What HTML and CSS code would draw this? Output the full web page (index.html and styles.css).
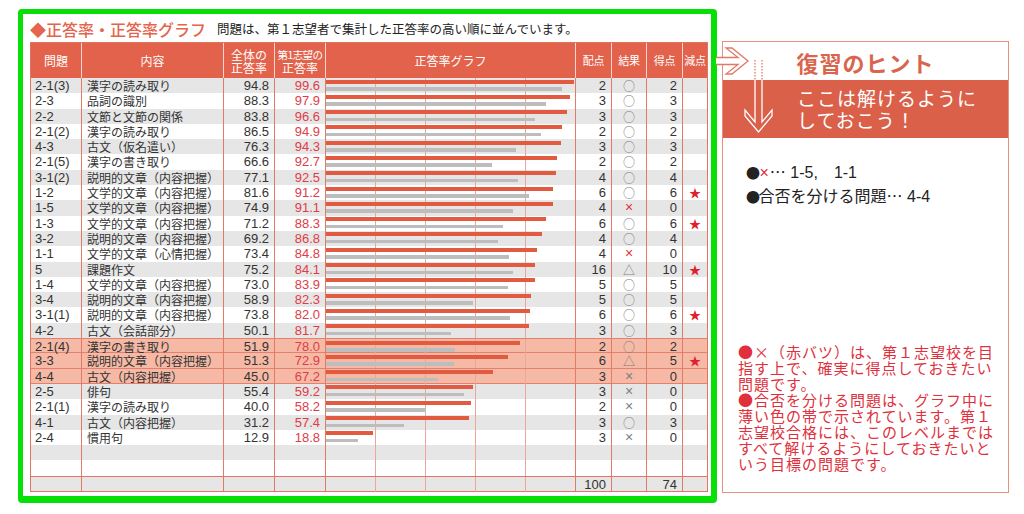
FILE: index.html
```html
<!DOCTYPE html>
<html lang="ja">
<head>
<meta charset="utf-8">
<title>正答率・正答率グラフ</title>
<link rel="stylesheet" href="styles.css">
</head>
<body>
<div class="page">
  <section class="frame">
    <div class="title">
      <span class="title-main">◆正答率・正答率グラフ</span>
      <span class="title-sub">問題は、第１志望者で集計した正答率の高い順に並んでいます。</span>
    </div>
    <div class="table">
      <div class="row head">
        <div class="c">問題</div>
        <div class="c">内容</div>
        <div class="c">全体の<br>正答率</div>
        <div class="c"><span class="h-small">第1志望の</span>正答率</div>
        <div class="c">正答率グラフ</div>
        <div class="c hn">配点</div>
        <div class="c hn">結果</div>
        <div class="c hn">得点</div>
        <div class="c hn">減点</div>
      </div>

      <div class="row odd"><div class="c no">2-1(3)</div><div class="c ct">漢字の読み取り</div><div class="c num">94.8</div><div class="c num red">99.6</div><div class="c graph"><div class="bar b1" style="width:99.6%"></div><div class="bar b2" style="width:94.8%"></div></div><div class="c num">2</div><div class="c res">○</div><div class="c num">2</div><div class="c star"></div></div>
      <div class="row"><div class="c no">2-3</div><div class="c ct">品詞の識別</div><div class="c num">88.3</div><div class="c num red">97.9</div><div class="c graph"><div class="bar b1" style="width:97.9%"></div><div class="bar b2" style="width:88.3%"></div></div><div class="c num">3</div><div class="c res">○</div><div class="c num">3</div><div class="c star"></div></div>
      <div class="row odd"><div class="c no">2-2</div><div class="c ct">文節と文節の関係</div><div class="c num">83.8</div><div class="c num red">96.6</div><div class="c graph"><div class="bar b1" style="width:96.6%"></div><div class="bar b2" style="width:83.8%"></div></div><div class="c num">3</div><div class="c res">○</div><div class="c num">3</div><div class="c star"></div></div>
      <div class="row"><div class="c no">2-1(2)</div><div class="c ct">漢字の読み取り</div><div class="c num">86.5</div><div class="c num red">94.9</div><div class="c graph"><div class="bar b1" style="width:94.9%"></div><div class="bar b2" style="width:86.5%"></div></div><div class="c num">2</div><div class="c res">○</div><div class="c num">2</div><div class="c star"></div></div>
      <div class="row odd"><div class="c no">4-3</div><div class="c ct">古文（仮名遣い）</div><div class="c num">76.3</div><div class="c num red">94.3</div><div class="c graph"><div class="bar b1" style="width:94.3%"></div><div class="bar b2" style="width:76.3%"></div></div><div class="c num">3</div><div class="c res">○</div><div class="c num">3</div><div class="c star"></div></div>
      <div class="row"><div class="c no">2-1(5)</div><div class="c ct">漢字の書き取り</div><div class="c num">66.6</div><div class="c num red">92.7</div><div class="c graph"><div class="bar b1" style="width:92.7%"></div><div class="bar b2" style="width:66.6%"></div></div><div class="c num">2</div><div class="c res">○</div><div class="c num">2</div><div class="c star"></div></div>
      <div class="row odd"><div class="c no">3-1(2)</div><div class="c ct">説明的文章（内容把握）</div><div class="c num">77.1</div><div class="c num red">92.5</div><div class="c graph"><div class="bar b1" style="width:92.5%"></div><div class="bar b2" style="width:77.1%"></div></div><div class="c num">4</div><div class="c res">○</div><div class="c num">4</div><div class="c star"></div></div>
      <div class="row"><div class="c no">1-2</div><div class="c ct">文学的文章（内容把握）</div><div class="c num">81.6</div><div class="c num red">91.2</div><div class="c graph"><div class="bar b1" style="width:91.2%"></div><div class="bar b2" style="width:81.6%"></div></div><div class="c num">6</div><div class="c res">○</div><div class="c num">6</div><div class="c star">★</div></div>
      <div class="row odd"><div class="c no">1-5</div><div class="c ct">文学的文章（内容把握）</div><div class="c num">74.9</div><div class="c num red">91.1</div><div class="c graph"><div class="bar b1" style="width:91.1%"></div><div class="bar b2" style="width:74.9%"></div></div><div class="c num">4</div><div class="c res x rx">×</div><div class="c num">0</div><div class="c star"></div></div>
      <div class="row"><div class="c no">1-3</div><div class="c ct">文学的文章（内容把握）</div><div class="c num">71.2</div><div class="c num red">88.3</div><div class="c graph"><div class="bar b1" style="width:88.3%"></div><div class="bar b2" style="width:71.2%"></div></div><div class="c num">6</div><div class="c res">○</div><div class="c num">6</div><div class="c star">★</div></div>
      <div class="row odd"><div class="c no">3-2</div><div class="c ct">説明的文章（内容把握）</div><div class="c num">69.2</div><div class="c num red">86.8</div><div class="c graph"><div class="bar b1" style="width:86.8%"></div><div class="bar b2" style="width:69.2%"></div></div><div class="c num">4</div><div class="c res">○</div><div class="c num">4</div><div class="c star"></div></div>
      <div class="row"><div class="c no">1-1</div><div class="c ct">文学的文章（心情把握）</div><div class="c num">73.4</div><div class="c num red">84.8</div><div class="c graph"><div class="bar b1" style="width:84.8%"></div><div class="bar b2" style="width:73.4%"></div></div><div class="c num">4</div><div class="c res x rx">×</div><div class="c num">0</div><div class="c star"></div></div>
      <div class="row odd"><div class="c no">5</div><div class="c ct">課題作文</div><div class="c num">75.2</div><div class="c num red">84.1</div><div class="c graph"><div class="bar b1" style="width:84.1%"></div><div class="bar b2" style="width:75.2%"></div></div><div class="c num">16</div><div class="c res">△</div><div class="c num">10</div><div class="c star">★</div></div>
      <div class="row"><div class="c no">1-4</div><div class="c ct">文学的文章（内容把握）</div><div class="c num">73.0</div><div class="c num red">83.9</div><div class="c graph"><div class="bar b1" style="width:83.9%"></div><div class="bar b2" style="width:73.0%"></div></div><div class="c num">5</div><div class="c res">○</div><div class="c num">5</div><div class="c star"></div></div>
      <div class="row odd"><div class="c no">3-4</div><div class="c ct">説明的文章（内容把握）</div><div class="c num">58.9</div><div class="c num red">82.3</div><div class="c graph"><div class="bar b1" style="width:82.3%"></div><div class="bar b2" style="width:58.9%"></div></div><div class="c num">5</div><div class="c res">○</div><div class="c num">5</div><div class="c star"></div></div>
      <div class="row"><div class="c no">3-1(1)</div><div class="c ct">説明的文章（内容把握）</div><div class="c num">73.8</div><div class="c num red">82.0</div><div class="c graph"><div class="bar b1" style="width:82.0%"></div><div class="bar b2" style="width:73.8%"></div></div><div class="c num">6</div><div class="c res">○</div><div class="c num">6</div><div class="c star">★</div></div>
      <div class="row odd"><div class="c no">4-2</div><div class="c ct">古文（会話部分）</div><div class="c num">50.1</div><div class="c num red">81.7</div><div class="c graph"><div class="bar b1" style="width:81.7%"></div><div class="bar b2" style="width:50.1%"></div></div><div class="c num">3</div><div class="c res">○</div><div class="c num">3</div><div class="c star"></div></div>
      <div class="row hi hi-first"><div class="c no">2-1(4)</div><div class="c ct">漢字の書き取り</div><div class="c num">51.9</div><div class="c num red">78.0</div><div class="c graph"><div class="bar b1" style="width:78.0%"></div><div class="bar b2" style="width:51.9%"></div></div><div class="c num">2</div><div class="c res">○</div><div class="c num">2</div><div class="c star"></div></div>
      <div class="row hi"><div class="c no">3-3</div><div class="c ct">説明的文章（内容把握）</div><div class="c num">51.3</div><div class="c num red">72.9</div><div class="c graph"><div class="bar b1" style="width:72.9%"></div><div class="bar b2" style="width:51.3%"></div></div><div class="c num">6</div><div class="c res">△</div><div class="c num">5</div><div class="c star">★</div></div>
      <div class="row hi"><div class="c no">4-4</div><div class="c ct">古文（内容把握）</div><div class="c num">45.0</div><div class="c num red">67.2</div><div class="c graph"><div class="bar b1" style="width:67.2%"></div><div class="bar b2" style="width:45.0%"></div></div><div class="c num">3</div><div class="c res x">×</div><div class="c num">0</div><div class="c star"></div></div>
      <div class="row odd"><div class="c no">2-5</div><div class="c ct">俳句</div><div class="c num">55.4</div><div class="c num red">59.2</div><div class="c graph"><div class="bar b1" style="width:59.2%"></div><div class="bar b2" style="width:55.4%"></div></div><div class="c num">3</div><div class="c res x">×</div><div class="c num">0</div><div class="c star"></div></div>
      <div class="row"><div class="c no">2-1(1)</div><div class="c ct">漢字の読み取り</div><div class="c num">40.0</div><div class="c num red">58.2</div><div class="c graph"><div class="bar b1" style="width:58.2%"></div><div class="bar b2" style="width:40.0%"></div></div><div class="c num">2</div><div class="c res x">×</div><div class="c num">0</div><div class="c star"></div></div>
      <div class="row odd"><div class="c no">4-1</div><div class="c ct">古文（内容把握）</div><div class="c num">31.2</div><div class="c num red">57.4</div><div class="c graph"><div class="bar b1" style="width:57.4%"></div><div class="bar b2" style="width:31.2%"></div></div><div class="c num">3</div><div class="c res">○</div><div class="c num">3</div><div class="c star"></div></div>
      <div class="row"><div class="c no">2-4</div><div class="c ct">慣用句</div><div class="c num">12.9</div><div class="c num red">18.8</div><div class="c graph"><div class="bar b1" style="width:18.8%"></div><div class="bar b2" style="width:12.9%"></div></div><div class="c num">3</div><div class="c res x">×</div><div class="c num">0</div><div class="c star"></div></div>

      <div class="row odd"><div class="c"></div><div class="c"></div><div class="c"></div><div class="c"></div><div class="c graph"></div><div class="c"></div><div class="c"></div><div class="c"></div><div class="c"></div></div>
      <div class="row"><div class="c"></div><div class="c"></div><div class="c"></div><div class="c"></div><div class="c graph"></div><div class="c"></div><div class="c"></div><div class="c"></div><div class="c"></div></div>
      <div class="row odd total"><div class="c"></div><div class="c"></div><div class="c"></div><div class="c"></div><div class="c graph"></div><div class="c num">100</div><div class="c"></div><div class="c num">74</div><div class="c"></div></div>
    </div>
  </section>

  <aside class="panel">
    <svg class="arrows" width="70" height="100" viewBox="0 0 70 100">
      <polyline points="0,16.5 22,16.5 10,7 16,7 32,20 16,33 10,33 22,23.5 0,23.5" fill="#fff" stroke="#e07a66" stroke-width="1.3" stroke-linejoin="miter"/>
      <line x1="39" y1="19" x2="39" y2="39" stroke="#e07a66" stroke-width="1.3" stroke-dasharray="1.5 1.5"/>
      <line x1="46" y1="19" x2="46" y2="39" stroke="#e07a66" stroke-width="1.3" stroke-dasharray="1.5 1.5"/>
      <polyline points="39,39 39,80.9 29,69 29,75 42.5,91 56,75 56,69 46,80.9 46,39" fill="none" stroke="#fff" stroke-width="1.3"/>
    </svg>
    <div class="panel-title">復習のヒント</div>
    <div class="panel-band">ここは解けるように<br>しておこう！</div>
    <div class="panel-points">
      <p><span class="dot">●</span><span class="xmark">×</span><span class="ell">…</span> 1-5,　1-1</p>
      <p><span class="dot">●</span>合否を分ける問題<span class="ell">…</span> 4-4</p>
    </div>
    <div class="panel-note">
      <p>●×（赤バツ）は、第１志望校を目<br>指す上で、確実に得点しておきたい<br>問題です。</p>
      <p>●合否を分ける問題は、グラフ中に<br>薄い色の帯で示されています。第１<br>志望校合格には、このレベルまでは<br>すべて解けるようにしておきたいと<br>いう目標の問題です。</p>
    </div>
  </aside>
</div>
</body>
</html>
```

FILE: styles.css
```css
* {
  box-sizing: border-box;
  margin: 0;
  padding: 0;
}

body {
  background: #ffffff;
  font-family: "Liberation Sans", "Noto Sans CJK JP", sans-serif;
  color: #333333;
}

.page {
  display: flex;
  align-items: flex-start;
  padding: 9px 0 0 18px;
}

/* ---------- left framed table ---------- */
.frame {
  width: 699px;
  border-style: solid;
  border-color: #06e006;
  border-width: 5px 6px 7px 5px;
  border-radius: 4px;
  padding: 0 3px 4px 7px;
}

.title {
  height: 28px;
  display: flex;
  align-items: center;
  gap: 11px;
  padding-top: 1px;
}

.title-main {
  font-family: "Noto Sans CJK JP", sans-serif;
  font-size: 16px;
  font-weight: 500;
  color: #e5644c;
}

.title-sub {
  font-family: "Noto Sans CJK JP", sans-serif;
  font-size: 12.5px;
  color: #222222;
}

.table {
  width: 678px;
  border: 1px solid #e27560;
}

.row {
  display: grid;
  grid-template-columns: 51px 142px 51px 51px 250px 36px 35px 36px 24px;
  height: 15.3px;
}

.row.odd {
  background: #e6e6e6;
}

.row.hi {
  background: #f5b9a5;
  border-bottom: 1px solid #e5806c;
}

.row.hi-first {
  border-top: 1px solid #e5806c;
}

.row.total {
  border-top: 1px solid #e27560;
}

.c {
  border-right: 1px solid #e27a66;
  font-size: 13px;
  line-height: 15px;
  white-space: nowrap;
}

.c:last-child {
  border-right: none;
}

.head {
  height: 35px;
  background: #e2624b;
  color: #ffffff;
}

.head .c {
  border-right-color: rgba(255, 255, 255, 0.75);
  display: flex;
  flex-direction: column;
  align-items: center;
  justify-content: center;
  text-align: center;
  font-family: "Noto Sans CJK JP", sans-serif;
  font-size: 12px;
  line-height: 13px;
}

.head .c.hn {
  font-size: 11px;
  letter-spacing: -0.3px;
}

.h-small {
  font-size: 10.5px;
  letter-spacing: -0.6px;
}

.no {
  padding-left: 4px;
}

.ct {
  padding-left: 5px;
  font-family: "Noto Sans CJK JP", sans-serif;
  font-size: 12px;
}

.num {
  text-align: right;
  padding-right: 5px;
}

.red {
  color: #e03c48;
}

.graph {
  padding-top: 1.5px;
  background-image: linear-gradient(to right, transparent 49px, #eda796 49px, #eda796 50px, transparent 50px);
  background-size: 50px 100%;
}

.bar {
  height: 4px;
}

.b1 {
  background: #e25b41;
  margin-bottom: 3.5px;
}

.b2 {
  background: #bdbdbd;
  height: 3.5px;
}

.res {
  text-align: center;
  color: #7d7d7d;
  font-family: "Noto Sans CJK JP", sans-serif;
  font-size: 12px;
}

.res.x {
  font-family: "Liberation Sans", sans-serif;
  font-size: 14px;
}

.res.rx {
  color: #e0303a;
}

.star {
  text-align: center;
  color: #e0202c;
  font-family: "Noto Sans CJK JP", sans-serif;
  font-size: 12px;
}

/* ---------- right hint panel ---------- */
.panel {
  position: relative;
  margin: 32px 0 0 5px;
  width: 287px;
  height: 452px;
  border: 1px solid #e8907c;
  display: flex;
  flex-direction: column;
  font-family: "Noto Sans CJK JP", sans-serif;
}

.arrows {
  position: absolute;
  left: -7px;
  top: -1px;
}

.panel-title {
  height: 38px;
  display: flex;
  align-items: center;
  justify-content: center;
  font-size: 22px;
  font-weight: 700;
  letter-spacing: 1px;
  color: #d9654d;
  padding-top: 2px;
}

.panel-band {
  height: 58px;
  background: #da604a;
  color: #ffffff;
  font-size: 19px;
  letter-spacing: 1px;
  line-height: 22px;
  padding: 7px 0 0 74px;
}

.panel-points {
  padding: 22px 0 0 23px;
  font-family: "Liberation Sans", "Noto Sans CJK JP", sans-serif;
  font-size: 16px;
  line-height: 22px;
  color: #222222;
}

.dot {
  font-family: "Noto Sans CJK JP", sans-serif;
  font-size: 14px;
  letter-spacing: -1.5px;
}

.ell {
  font-family: "Noto Sans CJK JP", sans-serif;
}

.xmark {
  color: #e0303a;
  padding: 0 1px;
}

.panel-note {
  margin-top: auto;
  padding: 0 0 20px 15px;
  font-size: 15px;
  line-height: 16px;
  letter-spacing: 1px;
  color: #e0303c;
}
```
